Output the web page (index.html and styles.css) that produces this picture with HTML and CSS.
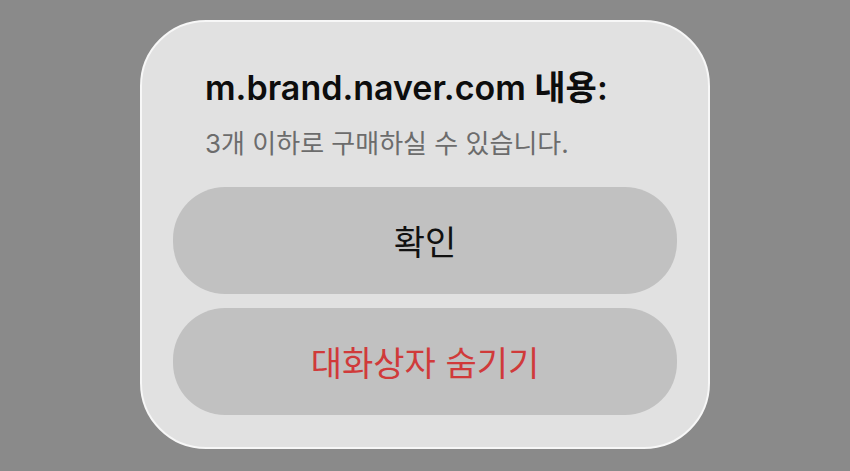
FILE: index.html
```html
<!DOCTYPE html>
<html lang="ko">
<head>
    <meta charset="UTF-8">
    <meta name="viewport" content="width=device-width, initial-scale=1.0">
    <title>Alert</title>
    <link rel="stylesheet" href="styles.css">
</head>
<body>
    <div class="screen">
        <div class="alert-box">
            <div class="alert-header">
                <h1 class="alert-title">m.brand.naver.com 내용:</h1>
                <p class="alert-message">3개 이하로 구매하실 수 있습니다.</p>
            </div>
            <div class="alert-actions">
                <button class="alert-button">확인</button>
                <button class="alert-button hide-button">대화상자 숨기기</button>
            </div>
        </div>
    </div>
</body>
</html>
```

FILE: styles.css
```css
body {
    margin: 0;
    font-family: Inter, "Noto Sans CJK KR", sans-serif;
    background-color: #8a8a8a;
}

.screen {
    display: flex;
    justify-content: center;
    padding-top: 20px;
    height: 451px;
}

.alert-box {
    width: 504px;
    height: 393px;
    padding: 0 31px 32px;
    background-color: #e1e1e1;
    border: 2px solid #f7f7f7;
    border-radius: 66px;
    display: flex;
    flex-direction: column;
}

.alert-header {
    padding: 45px 32px 0;
}

.alert-title {
    margin: 0;
    font-size: 34px;
    line-height: 41px;
    font-weight: 600;
    color: #0d0d0d;
}

.alert-message {
    margin: 20px 0 0;
    font-size: 26px;
    line-height: 31px;
    color: #6c6c6c;
}

.alert-actions {
    margin-top: 28px;
    display: flex;
    flex-direction: column;
    gap: 14px;
}

.alert-button {
    height: 107px;
    border: none;
    border-radius: 52px;
    background-color: #c1c1c1;
    font-family: Inter, "Noto Sans CJK KR", sans-serif;
    font-size: 34px;
    color: #111111;
    cursor: pointer;
}

.hide-button {
    color: #d03a3a;
}
```
